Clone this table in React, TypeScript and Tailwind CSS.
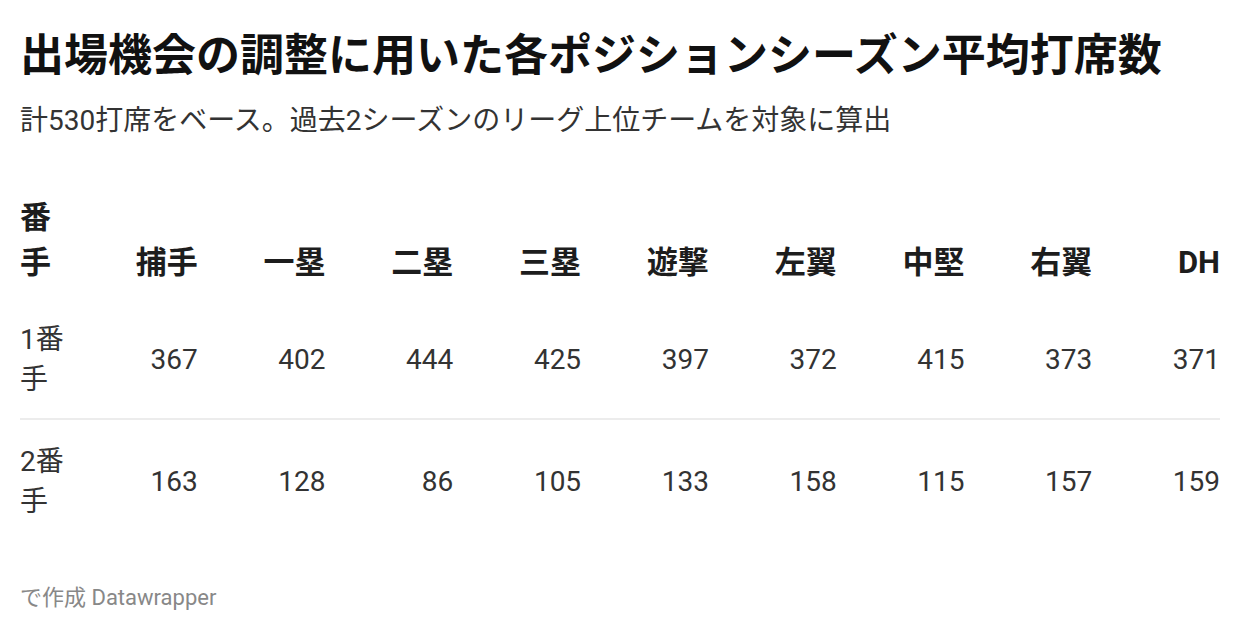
const positions = ['捕手', '一塁', '二塁', '三塁', '遊撃', '左翼', '中堅', '右翼', 'DH']

const rows = [
  { label: '1番手', values: [367, 402, 444, 425, 397, 372, 415, 373, 371] },
  { label: '2番手', values: [163, 128, 86, 105, 133, 158, 115, 157, 159] },
]

export default function App() {
  return (
    <div
      className="w-[1240px] h-[632px] bg-white px-[20px] pt-[30px] overflow-hidden"
      style={{ fontFamily: 'Roboto, "Noto Sans CJK JP", sans-serif' }}
    >
      <h1 className="text-[44px] leading-[52px] font-bold text-[#111] whitespace-nowrap">
        出場機会の調整に用いた各ポジションシーズン平均打席数
      </h1>
      <p className="mt-[19px] text-[28px] leading-[40px] text-[#333]">
        計530打席をベース。過去2シーズンのリーグ上位チームを対象に算出
      </p>

      <div className="mt-[54px] w-[1200px]">
        <div className="grid grid-cols-[50px_repeat(9,minmax(0,1fr))] items-end pb-[15px] text-[31px] leading-[45px] font-bold text-[#1d1d1d]">
          <div className="break-all">番手</div>
          {positions.map((p) => (
            <div key={p} className="text-right">
              {p}
            </div>
          ))}
        </div>

        {rows.map((row, i) => (
          <div
            key={row.label}
            className={
              i === 0
                ? 'grid grid-cols-[50px_repeat(9,minmax(0,1fr))] items-center pt-[20px] pb-[18px] border-b-2 border-[#ececec] text-[28px] leading-[40px] text-[#333]'
                : 'grid grid-cols-[50px_repeat(9,minmax(0,1fr))] items-center pt-[22px] pb-[18px] text-[28px] leading-[40px] text-[#333]'
            }
          >
            <div className="break-all">{row.label}</div>
            {row.values.map((v, j) => (
              <div key={j} className="text-right">
                {v}
              </div>
            ))}
          </div>
        ))}
      </div>

      <p className="mt-[43px] text-[22px] leading-[30px] text-[#888]">で作成 Datawrapper</p>
    </div>
  )
}
